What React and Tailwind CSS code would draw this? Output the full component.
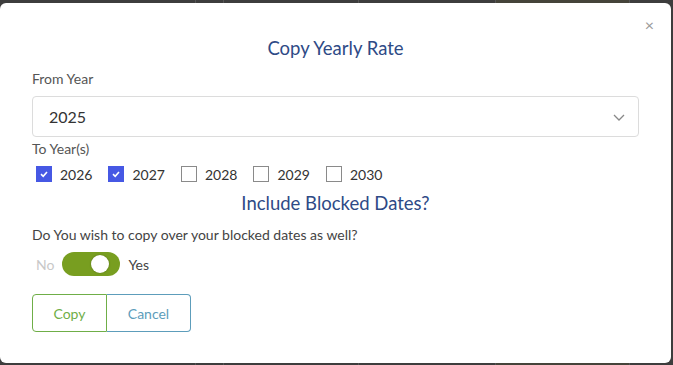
import React from "react";

export default function App() {
  const years = [
    { y: "2026", c: true },
    { y: "2027", c: true },
    { y: "2028", c: false },
    { y: "2029", c: false },
    { y: "2030", c: false },
  ];
  return (
    <div className="relative w-[673px] h-[365px] bg-[#3d3d3d] overflow-hidden" style={{ fontFamily: "Lato, 'Noto Sans', sans-serif" }}>
      <div className="absolute inset-0 flex">
        <div className="w-[196px] border-r border-[#555]" />
        <div className="w-[28px] border-r border-[#555]" />
        <div className="w-[135px] border-r border-[#555]" />
        <div className="w-[137px] border-r border-[#555]" />
        <div className="w-[134px] border-r border-[#555] bg-[#45443a]" />
      </div>
      <div className="absolute left-0 top-[3px] w-[671px] h-[360px] bg-white rounded-[6px] px-[32px] pt-[33px] text-[#444]">
        <button className="absolute right-[17px] top-[14px] text-[#9a9a9a] text-[16px] leading-none">×</button>
        <div className="text-center text-[#2e4a86] text-[18.5px] leading-[24px]">Copy Yearly Rate</div>
        <div className="mt-[9px] text-[14px] leading-[20px] text-[#555]">From Year</div>
        <div className="mt-[7px] h-[41px] border border-[#dcdcdc] rounded-[4px] flex items-center justify-between pl-[16px] pr-[12px]">
          <span className="text-[16px] text-[#333]">2025</span>
          <svg width="14" height="14" viewBox="0 0 14 14" fill="none" stroke="#888" strokeWidth="1.3">
            <path d="M2 5 L7 10 L12 5" />
          </svg>
        </div>
        <div className="mt-[2px] text-[14px] leading-[20px] text-[#555]">To Year(s)</div>
        <div className="mt-[4px] flex items-center pl-[4px] h-[22px]">
          {years.map((it) => (
            <div key={it.y} className="flex items-center mr-[16px]">
              {it.c ? (
                <div className="w-[16px] h-[16px] bg-[#4658e4] flex items-center justify-center">
                  <svg width="10" height="10" viewBox="0 0 10 10" fill="none" stroke="white" strokeWidth="1.6">
                    <path d="M2 5.2 L4.2 7.3 L8 3" />
                  </svg>
                </div>
              ) : (
                <div className="w-[16px] h-[16px] border border-[#8a8a8a] bg-white" />
              )}
              <span className="ml-[8px] text-[14px] text-[#333]">{it.y}</span>
            </div>
          ))}
        </div>
        <div className="mt-[6px] text-center text-[#2e4a86] text-[18.5px] leading-[24px]">Include Blocked Dates?</div>
        <div className="mt-[10px] text-[14px] leading-[20px] text-[#444]">Do You wish to copy over your blocked dates as well?</div>
        <div className="mt-[7px] flex items-center h-[24px] pl-[4px]">
          <span className="text-[14px] text-[#c8c8c8]">No</span>
          <div className="ml-[8px] w-[58px] h-[24px] rounded-full bg-[#789e20] relative">
            <div className="absolute right-[11px] top-[3px] w-[18px] h-[18px] rounded-full bg-white shadow-[0_0_2px_rgba(0,0,0,0.3)]" />
          </div>
          <span className="ml-[8px] text-[14px] text-[#444]">Yes</span>
        </div>
        <div className="mt-[18px] flex">
          <button className="w-[75px] h-[38px] border border-[#6fae47] rounded-l-[4px] text-[#6fae47] text-[14px]">Copy</button>
          <button className="w-[84px] h-[38px] border border-l-0 border-[#5d9dbb] rounded-r-[4px] text-[#5d9dbb] text-[14px]">Cancel</button>
        </div>
      </div>
    </div>
  );
}
